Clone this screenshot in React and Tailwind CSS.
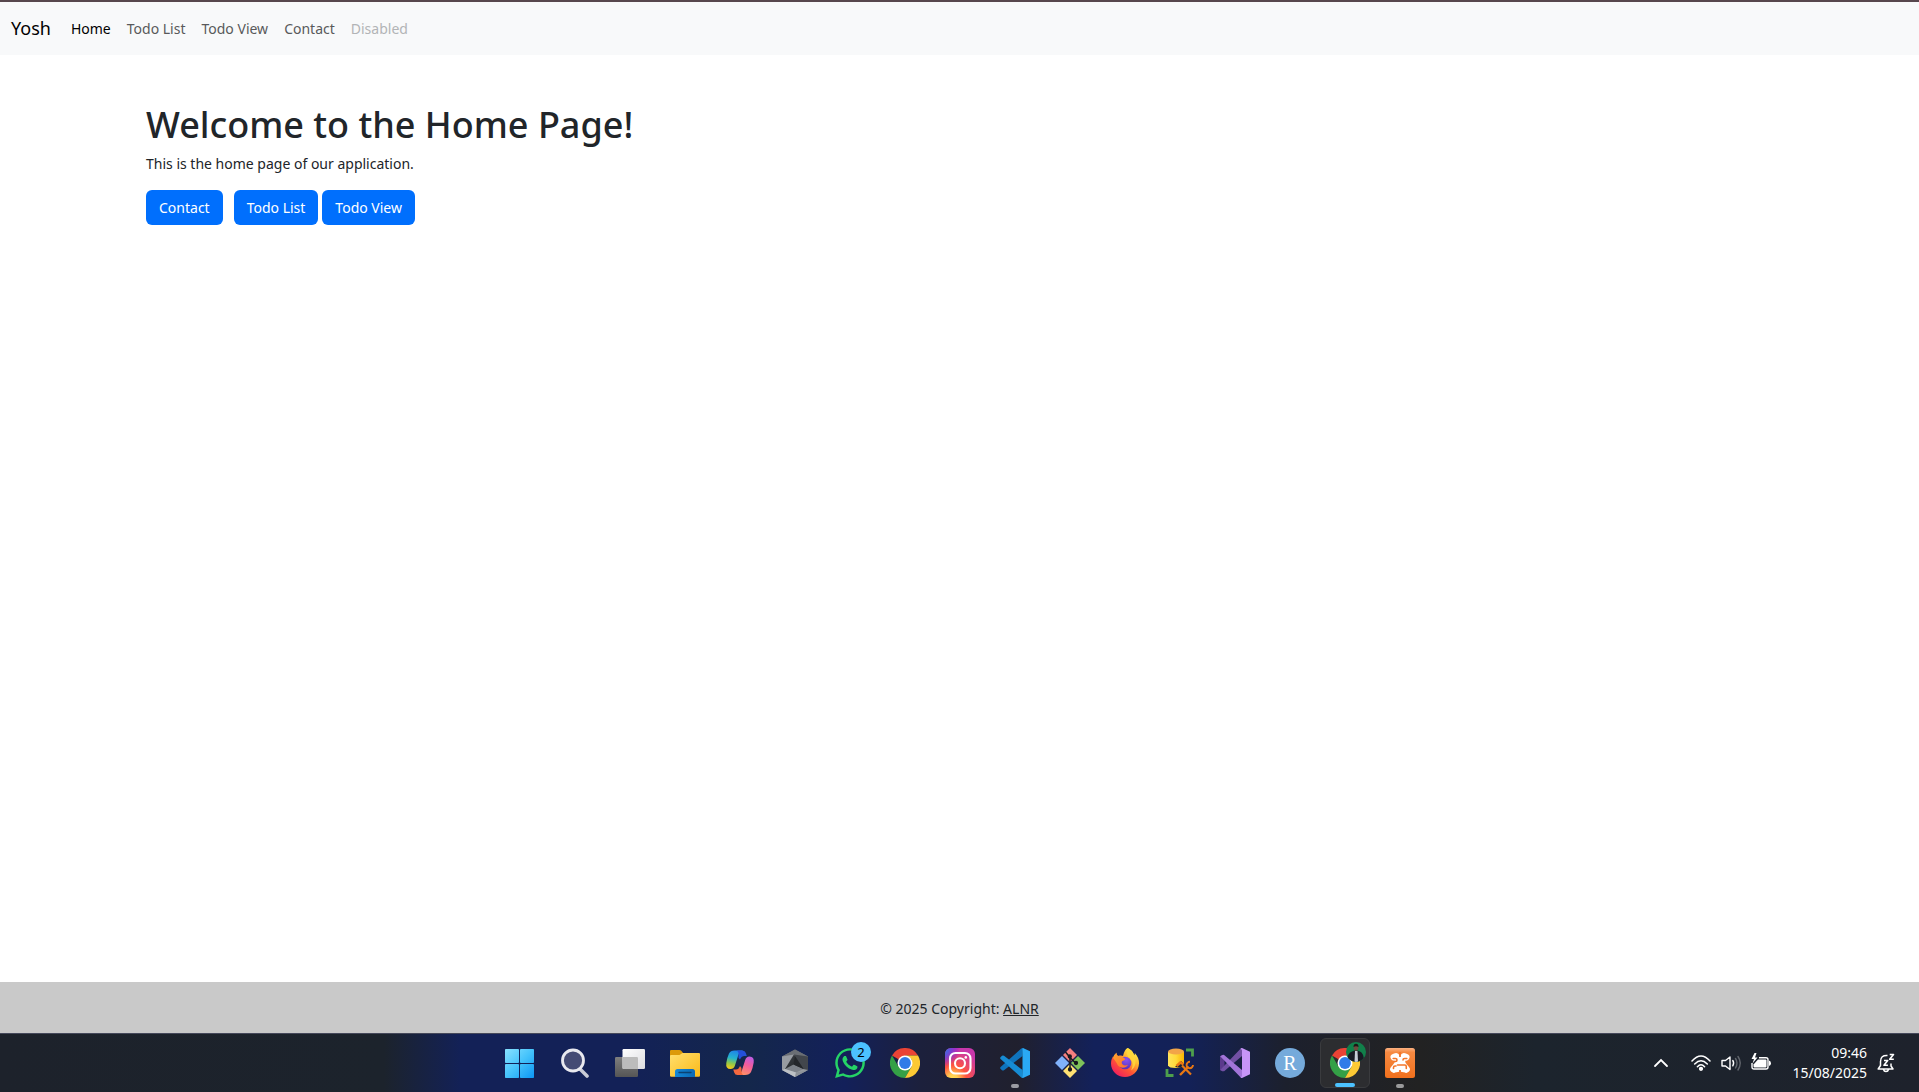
import React from "react";
import { FaWhatsapp } from "react-icons/fa";

const navLinks = ["Todo List", "Todo View", "Contact"];

function Navbar() {
  return (
    <header className="border-t-2 border-[#57474d] bg-[#f8f9fa]">
      <nav className="flex h-[53px] items-center px-[11px]">
        <a href="#" className="mr-5 text-[18px] text-black">Yosh</a>
        <ul className="flex items-center gap-4">
          <li><a href="#" className="text-black">Home</a></li>
          {navLinks.map((l) => (
            <li key={l}><a href="#" className="text-[#59595b]">{l}</a></li>
          ))}
          <li><a href="#" aria-disabled="true" className="text-[#b2b4b6]">Disabled</a></li>
        </ul>
      </nav>
    </header>
  );
}

const btn = "h-[35px] rounded-[6px] bg-[#006ffd] px-[13px] text-white";

function Home() {
  return (
    <main className="grow px-[146px] pt-[47px]">
      <h1 className="text-[36px] font-medium leading-[46px]">Welcome to the Home Page!</h1>
      <p className="mt-1 leading-6">This is the home page of our application.</p>
      <div className="mt-[14px] flex">
        <button type="button" className={btn + " mr-[11px]"}>Contact</button>
        <button type="button" className={btn + " mr-1"}>Todo List</button>
        <button type="button" className={btn}>Todo View</button>
      </div>
    </main>
  );
}

const svg = { viewBox: "0 0 30 30", className: "size-[30px]", "aria-hidden": true };

const Windows = () => (
  <svg {...svg}>
    <defs>
      <linearGradient id="win" x1="0" y1="0" x2="30" y2="30" gradientUnits="userSpaceOnUse">
        <stop offset="0" stopColor="#8be3ff" /><stop offset=".5" stopColor="#45c3fb" /><stop offset="1" stopColor="#0a95f5" />
      </linearGradient>
    </defs>
    <g fill="url(#win)">
      <rect x="0" y="1" width="14" height="14" rx=".8" /><rect x="15" y="1" width="14" height="14" rx=".8" />
      <rect x="0" y="16" width="14" height="14" rx=".8" /><rect x="15" y="16" width="14" height="14" rx=".8" />
    </g>
  </svg>
);

const SearchIcon = () => (
  <svg {...svg}>
    <path d="M20 21 27 28" stroke="#c9cbd6" strokeWidth="3.6" strokeLinecap="round" />
    <circle cx="13" cy="12.500" r="10.500" fill="#454b74" stroke="#e9e9ef" strokeWidth="2.8" />
  </svg>
);

const TaskView = () => (
  <svg {...svg}>
    <defs>
      <linearGradient id="tv1" x2="1" y2="1"><stop stopColor="#fff" /><stop offset="1" stopColor="#dcdce0" /></linearGradient>
      <linearGradient id="tv2" x2="0" y2="1"><stop stopColor="#7e7e7e" /><stop offset="1" stopColor="#555" /></linearGradient>
    </defs>
    <rect x="0" y="9" width="23" height="20" rx="1.2" fill="url(#tv2)" />
    <rect x="7.500" y="1" width="22.500" height="20" rx="1.2" fill="url(#tv1)" />
    <path d="M7.500 9H21.800Q23 9 23 10.200V21H8.700Q7.500 21 7.500 19.800Z" fill="#bcbcbc" />
  </svg>
);

const Explorer = () => (
  <svg {...svg}>
    <defs>
      <linearGradient id="fold" x2="1" y2="1"><stop stopColor="#ffdf6e" /><stop offset="1" stopColor="#fbb917" /></linearGradient>
      <linearGradient id="foldb" x2="1" y2="0"><stop stopColor="#1488d8" /><stop offset="1" stopColor="#0b68b4" /></linearGradient>
    </defs>
    <path d="M0 8V3Q0 2 1 2H9.500Q10.500 2 11.200 2.800L13.500 5.500V9H0Z" fill="#dc9a09" />
    <path d="M0 8Q0 7 1 7H9.500L12.500 5H29Q30 5 30 6V27.500Q30 28.700 28.800 28.700H1.200Q0 28.700 0 27.500Z" fill="url(#fold)" />
    <path d="M5 29V23.500Q5 21 7.500 21H22.500Q25 21 25 23.500V29Z" fill="url(#foldb)" />
    <path d="M9 24.500H21" stroke="#0b4272" strokeWidth="1.4" strokeLinecap="round" />
  </svg>
);

const Copilot = () => (
  <svg {...svg}>
    <defs>
      <linearGradient id="cp1" x1="10" y1="3" x2="6" y2="21" gradientUnits="userSpaceOnUse">
        <stop stopColor="#1f86e8" /><stop offset=".4" stopColor="#24b3cf" /><stop offset=".7" stopColor="#8fc84a" /><stop offset="1" stopColor="#f7c917" />
      </linearGradient>
      <linearGradient id="cp2" x1="25" y1="7" x2="16" y2="28" gradientUnits="userSpaceOnUse">
        <stop stopColor="#b45df0" /><stop offset=".45" stopColor="#f25c9c" /><stop offset="1" stopColor="#ff9a5c" />
      </linearGradient>
    </defs>
    <path d="M9.500 2.500H18Q14 4 13 8L9.800 18Q8.800 21 5.500 21Q.5 21 1.300 15Q2.300 9 4 5.500Q5.500 2.500 9.500 2.500Z" fill="url(#cp1)" />
    <path d="M12 2.500H17.500Q20 2.500 20.800 5L21.800 8H19Q16.500 8 15.500 10.500L15 11.500Q12.800 10 13.500 7Q14 4 12 2.500Z" fill="#2450d8" />
    <path d="M20 27H12Q16 26 17 22L20.200 12Q21.200 8.500 24.500 8.500Q29.500 8.500 28.700 14.500Q27.700 20.500 26 24Q24.500 27 20 27Z" fill="url(#cp2)" />
    <path d="M18 27H12.500Q10 27 9.200 24.500L8.200 21.500H11Q13.500 21.500 14.500 19L15 18Q17.200 19.500 16.500 22.500Q16 25.500 18 27Z" fill="#f4683f" />
  </svg>
);

const HexIcon = () => (
  <svg {...svg}>
    <defs>
      <linearGradient id="hx" x2="0" y2="1"><stop stopColor="#65686e" /><stop offset="1" stopColor="#a5a9af" /></linearGradient>
      <linearGradient id="hx2" x2="1" y2="1"><stop stopColor="#3d4146" /><stop offset="1" stopColor="#1e2124" /></linearGradient>
    </defs>
    <path d="M15 1.500 28 8.500V22L15 29 2 22V8.500Z" fill="url(#hx)" />
    <path d="M15 1.500 28 8.500 25 11 14 6.500 2 8.500Z" fill="#6a6e74" />
    <path d="M2 8.500 14 6.500 5 21 2 22Z" fill="#979ba1" />
    <path d="M28 8.500V22L23 21 14 6.500Z" fill="#42464c" />
    <path d="M14 6.500 23.500 21 5 21Z" fill="url(#hx2)" />
    <path d="M5 21 13.500 16.500 23.500 21 16 24.500Z" fill="#7d8289" />
    <path d="M13.500 16.500 15 8 23.500 21Z" fill="#24272b" />
    <path d="M2 22 5 21 16 24.500 15 29Z" fill="#bcc0c5" />
    <path d="M16 24.500 28 22 15 29Z" fill="#8d9298" />
  </svg>
);

const WhatsApp = () => (
  <span className="relative block size-[30px]">
    <FaWhatsapp className="-m-[2px] size-[34px] text-[#25d366]" aria-hidden="true" />
    <span className="absolute -top-[6px] left-4 flex size-5 items-center justify-center rounded-full bg-[#4cc2ff] text-[13px] leading-none text-black">2</span>
  </span>
);

const Chrome = () => (
  <svg {...svg}>
    <path d="M15 15 2 7.500A15 15 0 0 1 28 7.500H15Z" fill="#ea4335" />
    <path d="M2 7.500A15 15 0 0 0 15 30L21.500 18.750 15 15 8.500 18.750Z" fill="#34a046" />
    <path d="M28 7.500A15 15 0 0 1 15 30L21.500 18.750 21.500 11.250 15 7.500Z" fill="#fcc934" />
    <circle cx="15" cy="15" r="7.500" fill="#fff" />
    <circle cx="15" cy="15" r="5.900" fill="#2f7be8" />
  </svg>
);

const Instagram = () => (
  <svg {...svg}>
    <defs>
      <radialGradient id="ig1" cx="8" cy="31" r="30" gradientUnits="userSpaceOnUse">
        <stop stopColor="#ffdd55" /><stop offset=".15" stopColor="#ffcf50" /><stop offset=".45" stopColor="#ff543e" /><stop offset="1" stopColor="#c837ab" />
      </radialGradient>
      <radialGradient id="ig2" cx="-3" cy="1" r="18" gradientUnits="userSpaceOnUse">
        <stop stopColor="#3771c8" /><stop offset=".3" stopColor="#4a63dc" /><stop offset="1" stopColor="#6600ff" stopOpacity="0" />
      </radialGradient>
    </defs>
    <rect width="30" height="30" rx="6" fill="url(#ig1)" />
    <rect width="30" height="30" rx="6" fill="url(#ig2)" />
    <g fill="none" stroke="#fff" strokeWidth="2.100">
      <rect x="5" y="5" width="20.500" height="20.500" rx="5.500" /><circle cx="15" cy="15.200" r="5" />
    </g>
    <circle cx="20.800" cy="9.400" r="1.300" fill="#fff" />
  </svg>
);

const VSCode = () => (
  <svg {...svg}>
    <path d="M23 0 22.500 8 4 22.200Q3 23 2 22.200L.5 20.800Q-.3 19.800.6 19L21.300.6Q22 0 23 0Z" fill="#0f74bd" />
    <path d="M23 30 22.500 22 4 7.800Q3 7 2 7.800L.5 9.200Q-.3 10.200.6 11L21.300 29.400Q22 30 23 30Z" fill="#168bd3" />
    <path d="M23 0 30 3.200V26.800L23 30Q22 29.500 22.500 28V2Q22 .5 23 0Z" fill="#2aa9f4" />
  </svg>
);

const Git = () => (
  <svg {...svg}>
    <path d="M15 0 22 7 15 14 8 7Z" fill="#f37f7f" /><path d="M7 8 14 15 7 22 0 15Z" fill="#80b1fb" />
    <path d="M23 8 30 15 23 22 16 15Z" fill="#7fc35a" /><path d="M15 16 22 23 15 30 8 23Z" fill="#ffe173" />
    <g stroke="#17191f" strokeWidth="1.500" fill="#17191f">
      <path d="M10.500 4 15 9.500V21M15 9.500 20.500 15" fill="none" />
      <circle cx="14.800" cy="8.500" r="1.400" /><circle cx="15" cy="21.500" r="1.400" /><circle cx="21" cy="15" r="1.400" />
    </g>
  </svg>
);

const Firefox = () => (
  <svg {...svg}>
    <defs>
      <linearGradient id="ff1" x1="25" y1="3" x2="6" y2="28" gradientUnits="userSpaceOnUse">
        <stop stopColor="#fff44f" /><stop offset=".3" stopColor="#ffb52e" /><stop offset=".6" stopColor="#ff5634" /><stop offset="1" stopColor="#ef1a62" />
      </linearGradient>
      <radialGradient id="ff2" cx=".6" cy=".25" r=".8"><stop stopColor="#8a52f2" /><stop offset="1" stopColor="#5130b4" /></radialGradient>
      <linearGradient id="ff3" x2="1" y2="1"><stop stopColor="#ffa72f" /><stop offset="1" stopColor="#ff6a2c" /></linearGradient>
    </defs>
    <path d="M17.500 0C22 2 23.500 5 24.200 7.200 25 6.300 24.800 5 24.800 5 27.800 8 29.200 12 29 15.500 28.700 23.300 22.500 29 15 29 7 29 1 23 1 15.500 1 12 2.300 9.500 3 8.500L3.500 10.200C4 7 6.500 4.700 6.500 4.700 6.300 6.200 7 7.200 8 8 10.500 7.200 12 7.500 13 8 14 3.500 15.500 1.200 17.500 0Z" fill="url(#ff1)" />
    <circle cx="15" cy="15" r="6.300" fill="url(#ff2)" />
    <path d="M3 10C3.500 7 6.500 4.700 6.500 4.700 6.300 6.500 7.200 7.400 8.300 8 10.300 7.600 12.500 8.300 14 10 15 10.300 15.300 11.300 14.700 12 13.500 12.700 12 12.700 11.700 14.300 11.500 17 15 18.500 18 16.700 16.500 20 10.500 21 7.800 17.200 6.500 14.800 5 12 3 10Z" fill="url(#ff3)" />
    <path d="M17.500 0C22 2 23.500 5 24.200 7.200 27 13 25.500 19.500 21 22.500 24 17 22.500 12.500 19 9.500 16.500 7.500 16 3 17.500 0Z" fill="#ffd83b" opacity=".85" />
  </svg>
);

const Database = () => (
  <svg {...svg}>
    <defs>
      <linearGradient id="db" x2="1" y2="0"><stop stopColor="#ffe45c" /><stop offset=".5" stopColor="#ffdb3a" /><stop offset="1" stopColor="#fbb200" /></linearGradient>
    </defs>
    <path d="M3 4V17.500Q4 20 11 20T19 17.500V4Z" fill="url(#db)" />
    <ellipse cx="11" cy="3.500" rx="8" ry="3" fill="#f2a548" />
    <path d="M21 2H27.500V8.500" fill="none" stroke="#4d9f4c" strokeWidth="2.800" />
    <path d="M2 21V27.500H8.500" fill="none" stroke="#4d9f4c" strokeWidth="2.800" />
    <path d="M10 19 16 13 20 16.500 17 20Z" fill="#1a2334" />
    <g stroke="#e87713" fill="none">
      <path d="M11.500 18 15.500 14.500 18.500 16.500" strokeWidth="2.600" /><path d="M17 17.500 26 26.500" strokeWidth="2.200" />
      <path d="M15 27 23.500 18.500" strokeWidth="2.400" />
      <path d="M25 13.800A3.200 3.200 0 1 0 28 17" strokeWidth="1.900" />
    </g>
  </svg>
);

const VisualStudio = () => (
  <svg {...svg}>
    <path d="M2.500 7 0 8.200V22L2.500 23.200 4.500 22.500V8Z" fill="#5b3a8c" />
    <path d="M2.500 23.200.2 22 20.500.800 22 0V8L5 22.500Q3.700 23.700 2.500 23.200Z" fill="#7250a4" />
    <path d="M2.500 7 .2 8.200 20.500 29.200 22 30V22L5 7.700Q3.700 6.500 2.500 7Z" fill="#a274d8" />
    <path d="M22 0 30 3.800V26.200L22 30Q20.800 29.800 20.500 29 22 29 22 27.500V2.500Q22 1 20.500 1 20.800.200 22 0Z" fill="#c795f8" />
  </svg>
);

const RStudio = () => (
  <span className="flex size-[30px] items-center justify-center rounded-full bg-[#75aadb] font-['Liberation_Serif',serif] text-[20px] leading-none text-white">R</span>
);

const Xampp = () => (
  <svg {...svg}>
    <defs>
      <linearGradient id="xa" x2="0" y2="1"><stop stopColor="#fbb283" /><stop offset=".14" stopColor="#f68a42" /><stop offset="1" stopColor="#f1701c" /></linearGradient>
    </defs>
    <rect width="30" height="30" rx="2.500" fill="url(#xa)" />
    <path d="M9 9.200 11 8.500 13 11.500 13.500 15 11 18.500 8.700 21.200M21 9.200 19 8.500 17 11.500 16.500 15 19 18.500 21.300 21.200M13 15H17" fill="none" stroke="#fff" strokeWidth="7" strokeLinejoin="round" strokeLinecap="round" />
    <path d="M9 21.200H11.500Q14 21 13.800 18.500M21 21.200H18.500Q16 21 16.200 18.500" fill="none" stroke="#fff" strokeWidth="6" strokeLinecap="round" />
    <path d="M8.200 10.500H10.500Q12 10.500 12 12T10.500 13.500H8.700M21.800 10.500H19.500Q18 10.500 18 12M8.500 20.500V19.500Q8.500 18 10 18H11M21.300 20.500V18.500Q21.300 17 19.800 17H12.500" fill="none" stroke="#f3762a" strokeWidth="1.600" strokeLinecap="round" />
    <path d="M15 4V9M15 22V27" stroke="#f3762a" strokeWidth="1.800" />
  </svg>
);

const ChromeProfile = () => (
  <span className="relative block size-[30px]">
    <Chrome />
    <svg viewBox="0 0 20 20" className="absolute -top-[6px] left-4 size-5" aria-hidden="true">
      <defs><clipPath id="av"><circle cx="10" cy="10" r="10" /></clipPath></defs>
      <g clipPath="url(#av)">
        <rect width="20" height="20" fill="#11804a" />
        <path d="M1 20Q1 11 6 9.500L10 8 14 9.500Q18 11 18 20Z" fill="#171a24" />
        <path d="M9 9H11.500L12 20H8.500Z" fill="#c5ccd6" />
        <ellipse cx="10" cy="5.500" rx="2.300" ry="3.200" fill="#6e4b3e" />
        <path d="M7.500 5Q7.500 1.800 10 1.800T12.500 5Q10 3.500 7.500 5Z" fill="#1b1614" />
      </g>
    </svg>
  </span>
);

const apps = [
  ["Start", Windows], ["Search", SearchIcon], ["Task view", TaskView], ["File Explorer", Explorer],
  ["Copilot", Copilot], ["Hex tool", HexIcon], ["WhatsApp", WhatsApp], ["Chrome", Chrome],
  ["Instagram", Instagram], ["Visual Studio Code", VSCode, "bg-[#9a9ba3] w-2"], ["Git", Git], ["Firefox", Firefox],
  ["Database tools", Database], ["Visual Studio", VisualStudio], ["RStudio", RStudio],
  ["Chrome profile", ChromeProfile, "bg-[#4cc2ff] w-5", true], ["XAMPP", Xampp, "bg-[#9a9a9b] w-2"],
];

function Tray() {
  return (
    <div className="flex items-center justify-end pr-[24px] text-white">
      <button type="button" aria-label="Show hidden icons" className="mr-[22px]">
        <svg viewBox="0 0 16 16" className="size-4" fill="none" stroke="#fff" strokeWidth="1.8" strokeLinecap="round"><path d="m2 11 6-6 6 6" /></svg>
      </button>
      <button type="button" aria-label="Network, volume and battery" className="mr-[18px] flex gap-[10px]">
        <svg viewBox="0 0 20 20" className="size-5" fill="none" stroke="#fff" strokeWidth="1.500" strokeLinecap="round">
          <path d="M1 8Q10-2 19 8M3.700 11Q10 4.500 16.300 11M6.400 13.700Q10 10 13.600 13.700" /><circle cx="10" cy="15.800" r="1.400" fill="#fff" />
        </svg>
        <svg viewBox="0 0 20 20" className="size-5" fill="none" stroke="#fff" strokeWidth="1.400" strokeLinecap="round" strokeLinejoin="round">
          <path d="M1 7.500H4.500L9 4V16.500L4.500 13H1Z" /><path d="M11.800 7.500Q13.500 10 11.800 12.800" />
          <path d="M14.500 5.500Q17.500 10 14.500 15M17 3.500Q21.500 10 17 17" stroke="#62666d" />
        </svg>
        <svg viewBox="0 0 20 20" className="size-5" fill="none">
          <path d="M8 4.700H15Q17 4.700 17 6.700V14Q17 16 15 16H3Q1 16 1 14V10" stroke="#fff" strokeWidth="1.400" />
          <path d="M7 6.500H14.500Q15.500 6.500 15.500 7.500V13.500Q15.500 14.500 14.500 14.500H3.500Q2.500 14.500 2.500 13.500V11.500Z" fill="#fff" /><path d="M18 7.500Q20 8 20 10.300T18 13Z" fill="#fff" />
          <path d="M3.500 0 .5 6H3L1.500 10.500 6.500 4.500H4L5.500 0Z" fill="#fff" />
        </svg>
      </button>
      <div className="mr-[10px] text-right text-[14px] leading-5"><div>09:46</div><div className="min-w-[78px]">15/08/2025</div></div>
      <button type="button" aria-label="Notifications">
        <svg viewBox="0 0 18 20" className="h-5 w-[18px]" fill="none" stroke="#fff" strokeWidth="1.500" strokeLinejoin="round">
          <path d="M10.500 2.500Q3.500 2 3.500 8.500V12.500L1.200 16H16L14 13V10.500M6.500 16.500Q7 18.500 9 18.500T11.500 16.500" />
          <path d="M7 7.500H10.700L7 12.300H10.900M12.700 1.500H16.500L12.700 6.300H16.800" strokeWidth="1.600" />
        </svg>
      </button>
    </div>
  );
}

function Taskbar() {
  return (
    <div className="grid h-[59px] grid-cols-[1fr_auto_1fr] border-t border-[#45485a] bg-[linear-gradient(90deg,#1d222b_0%,#1c232c_20%,#132157_24%,#132157_33%,#14274b_39%,#13205a_44%,#1c203c_48%,#20202e_53%,#13215a_57%,#132157_62%,#1c202d_67%,#222222_74%,#1c242d_80%,#1e222c_100%)]">
      <div />
      <div className="flex items-center pl-px">
        {apps.map(([name, Icon, mark, active]) => (
          <div key={name} className="flex w-[55px] justify-center">
            <button
              type="button"
              aria-label={name}
              className={"relative flex h-[50px] w-[50px] items-center justify-center rounded-[6px] " + (active ? "border border-[#3a3b3e] bg-[#2c2d30]" : "")}
            >
              <Icon />
              {mark && <span className={"absolute inset-x-0 bottom-0 mx-auto h-1 rounded-full " + mark} />}
            </button>
          </div>
        ))}
      </div>
      <Tray />
    </div>
  );
}

export default function App() {
  return (
    <div className="flex min-h-screen flex-col bg-white font-['Noto_Sans','Open_Sans',sans-serif] text-[14px] text-[#212529]">
      <Navbar />
      <Home />
      <footer className="flex h-[51px] items-center justify-center bg-[#c9c9c9] pt-[2px]">
        <p>© 2025 Copyright: <a href="#" className="underline">ALNR</a></p>
      </footer>
      <Taskbar />
    </div>
  );
}
